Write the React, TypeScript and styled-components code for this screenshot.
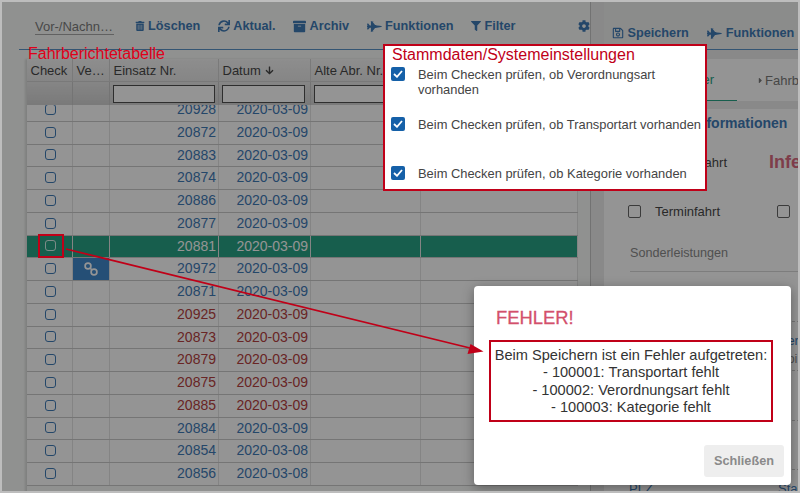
import React from 'react'
import styled, { createGlobalStyle } from 'styled-components'
import { FaTrashAlt, FaSync, FaArchive, FaFighterJet, FaFilter, FaCog, FaRegSave, FaCaretRight, FaArrowDown } from 'react-icons/fa'

type Row = { nr: string; date: string; tone: 'blue' | 'red'; selected?: boolean; linked?: boolean }

const rows: Row[] = [
  { nr: '20928', date: '2020-03-09', tone: 'blue' },
  { nr: '20872', date: '2020-03-09', tone: 'blue' },
  { nr: '20883', date: '2020-03-09', tone: 'blue' },
  { nr: '20874', date: '2020-03-09', tone: 'blue' },
  { nr: '20886', date: '2020-03-09', tone: 'blue' },
  { nr: '20877', date: '2020-03-09', tone: 'blue' },
  { nr: '20881', date: '2020-03-09', tone: 'blue', selected: true },
  { nr: '20972', date: '2020-03-09', tone: 'blue', linked: true },
  { nr: '20871', date: '2020-03-09', tone: 'blue' },
  { nr: '20925', date: '2020-03-09', tone: 'red' },
  { nr: '20873', date: '2020-03-09', tone: 'red' },
  { nr: '20879', date: '2020-03-09', tone: 'red' },
  { nr: '20875', date: '2020-03-09', tone: 'red' },
  { nr: '20885', date: '2020-03-09', tone: 'red' },
  { nr: '20884', date: '2020-03-09', tone: 'blue' },
  { nr: '20854', date: '2020-03-08', tone: 'blue' },
  { nr: '20856', date: '2020-03-08', tone: 'blue' },
]

const checks = [
  'Beim Checken prüfen, ob Verordnungsart vorhanden',
  'Beim Checken prüfen, ob Transportart vorhanden',
  'Beim Checken prüfen, ob Kategorie vorhanden',
]

const errors = [
  'Beim Speichern ist ein Fehler aufgetreten:',
  '- 100001: Transportart fehlt',
  '- 100002: Verordnungsart fehlt',
  '- 100003: Kategorie fehlt',
]

export default function App() {
  return (
    <Frame>
      <GlobalStyle />
      <LeftPane>
        <Toolbar>
          <SearchField>Vor-/Nachn…</SearchField>
          <ToolButton><FaTrashAlt size={10} />Löschen</ToolButton>
          <ToolButton><FaSync size={12} />Aktual.</ToolButton>
          <ToolButton><FaArchive size={13} />Archiv</ToolButton>
          <ToolButton><FaFighterJet size={15} />Funktionen</ToolButton>
          <ToolButton><FaFilter size={10} />Filter</ToolButton>
          <GearButton><FaCog size={12} /></GearButton>
        </Toolbar>
        <Table>
          <HeaderRow>
            <HeaderCell>Check</HeaderCell>
            <HeaderCell>Ve…</HeaderCell>
            <HeaderCell>Einsatz Nr.</HeaderCell>
            <HeaderCell>Datum <FaArrowDown size={9} /></HeaderCell>
            <HeaderCell>Alte Abr. Nr.</HeaderCell>
            <HeaderCell />
          </HeaderRow>
          <FilterRow>
            <FilterCell />
            <FilterCell />
            <FilterCell><FilterInput $width={102} /></FilterCell>
            <FilterCell><FilterInput $width={83} /></FilterCell>
            <FilterCell><FilterInput $width={100} /></FilterCell>
            <FilterCell />
          </FilterRow>
          <TableBody>
            <BodyScroll>
              {rows.map((row) => (
                <DataRow key={row.nr} $selected={row.selected}>
                  <CheckCell><RowCheck $selected={row.selected} /></CheckCell>
                  <LinkCell $linked={row.linked}>
                    {row.linked && (
                      <svg width="16" height="16" viewBox="0 0 16 16" fill="none" stroke="#fff" strokeWidth="1.7">
                        <circle cx="5" cy="5" r="2.9" />
                        <circle cx="11" cy="11" r="2.9" />
                        <path d="M7 7l2 2" />
                      </svg>
                    )}
                  </LinkCell>
                  <NumberCell $tone={row.tone} $selected={row.selected}>{row.nr}</NumberCell>
                  <NumberCell $tone={row.tone} $selected={row.selected}>{row.date}</NumberCell>
                  <EmptyCell />
                  <EmptyCell />
                </DataRow>
              ))}
            </BodyScroll>
          </TableBody>
        </Table>
      </LeftPane>
      <Splitter />
      <RightPane>
        <RightToolbar>
          <ToolButton><FaRegSave size={12} />Speichern</ToolButton>
          <ToolButton><FaFighterJet size={15} />Funktionen</ToolButton>
        </RightToolbar>
        <TabBar>
          <ActiveTab><FaCaretRight size={9} />Fahrer</ActiveTab>
          <Tab><FaCaretRight size={9} />Fahrbericht</Tab>
        </TabBar>
        <Card>
          <CardTitle>Fahrtinformationen</CardTitle>
          <InfoRow>
            <InfoLabel>Fahrt</InfoLabel>
            <InfoWarning>Infektion</InfoWarning>
          </InfoRow>
          <OptionRow>
            <OptionBox />
            <OptionLabel>Terminfahrt</OptionLabel>
            <OptionBox />
          </OptionRow>
          <ExtrasField>Sonderleistungen</ExtrasField>
          <DetailRow $top={15}><DetailLeft>Kunde</DetailLeft></DetailRow>
          <DetailRow $top={11}>
            <DetailStack>
              <DetailRight>Herr</DetailRight>
              <DetailMuted>Doi</DetailMuted>
            </DetailStack>
          </DetailRow>
          <DetailRow $top={11} />
          <DetailRow $top={11} />
          <DetailRow $top={11}><DetailLeft>PLZ</DetailLeft><DetailRight>Stadt</DetailRight></DetailRow>
        </Card>
      </RightPane>

      <Backdrop />

      <Modal>
        <ModalTitle>FEHLER!</ModalTitle>
        <ErrorBox>
          {errors.map((line) => <div key={line}>{line}</div>)}
        </ErrorBox>
        <ModalFooter>
          <CloseButton>Schließen</CloseButton>
        </ModalFooter>
      </Modal>

      <TableNote>Fahrberichtetabelle</TableNote>
      <MarkedCheck />
      <ArrowLayer width="800" height="493" viewBox="0 0 800 493">
        <path d="M66 249L472 348.5" stroke="#c00018" strokeWidth="1.8" fill="none" />
        <path d="M483.5 351.5L467.5 354L470.5 344Z" fill="#c00018" />
      </ArrowLayer>
      <SettingsNote>
        <SettingsTitle>Stammdaten/Systemeinstellungen</SettingsTitle>
        {checks.map((text) => (
          <SettingRow key={text}>
            <SettingBox>
              <svg width="10" height="8" viewBox="0 0 10 8" fill="none" stroke="#fff" strokeWidth="1.8">
                <path d="M1 4l3 2.8L9 1" />
              </svg>
            </SettingBox>
            <SettingText>{text}</SettingText>
          </SettingRow>
        ))}
      </SettingsNote>
    </Frame>
  )
}

const GlobalStyle = createGlobalStyle`
  html, body { margin: 0; padding: 0; background: #bbb; }
  * { box-sizing: border-box; }
`

const columns = '46px 37px 109px 92px 110px 157px'
const red = '#c00018'
const blue = '#3f7ab6'

const Frame = styled.div`
  position: relative;
  width: 800px;
  height: 493px;
  overflow: hidden;
  display: flex;
  background: #fff;
  font-family: "Liberation Sans", Arial, sans-serif;
  &::after {
    content: "";
    position: absolute;
    inset: 0;
    border: 2px solid #bdbdbd;
    z-index: 10;
    pointer-events: none;
  }
`

const LeftPane = styled.div`
  width: 590px;
  flex: none;
  display: flex;
  flex-direction: column;
  background: #f8faf8;
`

const Toolbar = styled.div`
  height: 50px;
  flex: none;
  margin-left: 19px;
  padding: 17px 0 0 16px;
  display: flex;
  align-items: flex-start;
  gap: 17.5px;
  border-bottom: 1px solid #5b93c7;
`

const SearchField = styled.div`
  width: 81px;
  height: 19px;
  margin-right: 3px;
  margin-top: -1px;
  font-size: 13px;
  line-height: 21px;
  color: #7d7d7d;
  border-bottom: 1px solid #a8a8a8;
`

const ToolButton = styled.div`
  display: flex;
  align-items: center;
  gap: 3.5px;
  height: 20px;
  margin-top: -1px;
  font-size: 12.7px;
  font-weight: 700;
  color: ${blue};
  white-space: nowrap;
`

const GearButton = styled(ToolButton)`
  margin-left: 45px;
`

const Table = styled.div`
  margin: 9px 12px 0 27px;
  flex: 1;
  min-height: 0;
  display: flex;
  flex-direction: column;
  box-shadow: -2px 0 2px rgba(0, 0, 0, 0.12);
`

const HeaderRow = styled.div`
  display: grid;
  flex: none;
  grid-template-columns: ${columns};
  height: 23px;
  background: linear-gradient(#f4f4f4, #e6e6e6);
  border-bottom: 1px solid #d0d0d0;
`

const HeaderCell = styled.div`
  padding: 0 3.5px;
  font-size: 13px;
  line-height: 23px;
  color: #484848;
  white-space: nowrap;
  overflow: hidden;
  border-right: 1px solid #d2d2d2;
  svg { margin-left: 1px; }
`

const FilterRow = styled.div`
  display: grid;
  flex: none;
  grid-template-columns: ${columns};
  height: 23px;
  background: linear-gradient(#e6e6e6, #d2d2d2);
`

const FilterCell = styled.div`
  padding: 3px;
  overflow: hidden;
  border-right: 1px solid #c8c8c8;
`

const FilterInput = styled.div<{ $width: number }>`
  width: ${(props) => props.$width}px;
  height: 18px;
  background: #fff;
  border: 1px solid #505050;
  border-top-width: 1.5px;
`

const TableBody = styled.div`
  flex: 1;
  min-height: 0;
  overflow: hidden;
`

const BodyScroll = styled.div`
  margin-top: -6px;
`

const DataRow = styled.div<{ $selected?: boolean }>`
  display: grid;
  grid-template-columns: ${columns};
  height: 22.75px;
  background: ${(props) => (props.$selected ? '#28a385' : '#fff')};
  border-bottom: 1.5px solid #cacaca;
`

const EmptyCell = styled.div`
  border-right: 1px solid #e4e4e4;
`

const CheckCell = styled(EmptyCell)`
  display: flex;
  align-items: center;
  justify-content: center;
  padding: 0 0 1px 1px;
`

const RowCheck = styled.span<{ $selected?: boolean }>`
  width: 11px;
  height: 11px;
  border-radius: 3px;
  border: 1.2px solid ${(props) => (props.$selected ? '#d8f0ea' : blue)};
`

const LinkCell = styled(EmptyCell)<{ $linked?: boolean }>`
  display: flex;
  align-items: center;
  justify-content: center;
  background: ${(props) => (props.$linked ? '#4088cc' : 'transparent')};
`

const NumberCell = styled(EmptyCell)<{ $tone: 'blue' | 'red'; $selected?: boolean }>`
  padding-right: 2px;
  text-align: right;
  font-size: 14px;
  line-height: 21px;
  color: ${(props) => (props.$selected ? '#fff' : props.$tone === 'red' ? '#b54040' : blue)};
`

const Splitter = styled.div`
  width: 14px;
  flex: none;
  background: #ececec;
  border-left: 1px solid #c4c4c4;
`

const RightPane = styled.div`
  flex: 1;
  min-width: 0;
  display: flex;
  flex-direction: column;
  background: #ececec;
  overflow: hidden;
`

const RightToolbar = styled.div`
  height: 50px;
  flex: none;
  padding: 24px 0 0 8px;
  display: flex;
  align-items: flex-start;
  gap: 18.5px;
  border-bottom: 1px solid #5b93c7;
  background: #f0f2f0;
`

const TabBar = styled.div`
  height: 42px;
  flex: none;
  margin-top: 9px;
  display: flex;
  background: #fff;
  white-space: nowrap;
`

const Tab = styled.div`
  display: flex;
  align-items: center;
  padding-left: 19px;
  font-size: 13px;
  color: #7a7a7a;
`

const ActiveTab = styled(Tab)`
  width: 133px;
  flex: none;
  padding: 0 23px 0 0;
  justify-content: flex-end;
  color: #28a385;
  border-bottom: 1px solid #28a385;
`

const Card = styled.div`
  margin-top: 8px;
  flex: 1;
  min-height: 0;
  overflow: hidden;
  padding: 0 0 0 24px;
  background: #fff;
`

const CardTitle = styled.div`
  height: 30px;
  padding: 5px 0 0 31px;
  font-size: 14px;
  font-weight: 700;
  line-height: 18px;
  color: ${blue};
  white-space: nowrap;
`

const InfoRow = styled.div`
  height: 47px;
  display: grid;
  grid-template-columns: 141px 1fr;
  align-items: center;
  white-space: nowrap;
`

const InfoLabel = styled.div`
  font-size: 13px;
  color: #484848;
  text-align: right;
  padding-right: 42px;
`

const InfoWarning = styled.div`
  font-size: 18px;
  font-weight: 700;
  color: #d96a80;
`

const OptionRow = styled.div`
  height: 50px;
  display: flex;
  align-items: center;
  white-space: nowrap;
`

const OptionBox = styled.span`
  width: 13px;
  height: 13px;
  flex: none;
  border: 1.3px solid #666;
  border-radius: 2px;
`

const OptionLabel = styled.span`
  margin: 0 58px 0 14px;
  width: 64px;
  font-size: 13px;
  color: #484848;
`

const ExtrasField = styled.div`
  height: 36px;
  margin-left: 2px;
  padding-top: 7px;
  font-size: 12.6px;
  line-height: 20px;
  color: #8a8a8a;
  border-bottom: 1px solid #d8d8d8;
`

const DetailRow = styled.div<{ $top: number }>`
  height: 49.5px;
  display: flex;
  justify-content: space-between;
  padding: ${(props) => props.$top}px 0 0 1px;
  font-size: 13px;
  border-bottom: 1px dashed #c8c8c8;
  &:last-child { border-bottom: none; }
`

const DetailLeft = styled.span`
  color: ${blue};
`

const DetailStack = styled.div`
  margin-left: auto;
  display: flex;
  flex-direction: column;
  gap: 3px;
`

const DetailRight = styled(DetailLeft)`
  width: 22px;
  overflow: hidden;
  white-space: nowrap;
`

const DetailMuted = styled(DetailRight)`
  color: #8a8a8a;
`

const Backdrop = styled.div`
  position: absolute;
  inset: 0;
  background: rgba(0, 0, 0, 0.42);
`

const Modal = styled.div`
  position: absolute;
  left: 474px;
  top: 286px;
  width: 317px;
  height: 199px;
  padding: 0 7px 8px 15px;
  display: flex;
  flex-direction: column;
  background: #fff;
  border-radius: 4px;
  box-shadow: 0 3px 12px rgba(0, 0, 0, 0.35);
`

const ModalTitle = styled.div`
  padding: 21px 0 0 7px;
  height: 53.5px;
  font-size: 18.4px;
  line-height: 22px;
  -webkit-text-stroke: 0.3px #d3506c;
  color: #d3506c;
`

const ErrorBox = styled.div`
  width: 284px;
  height: 82px;
  padding-top: 5px;
  border: 2px solid ${red};
  font-size: 14.6px;
  line-height: 17.5px;
  text-align: center;
  color: #333;
  white-space: nowrap;
`

const ModalFooter = styled.div`
  margin-top: auto;
  display: flex;
  justify-content: flex-end;
`

const CloseButton = styled.div`
  width: 80px;
  height: 32px;
  background: #eeeeee;
  border-radius: 3px;
  font-size: 12.7px;
  font-weight: 700;
  line-height: 32px;
  text-align: center;
  color: #8a8a8a;
`

const TableNote = styled.div`
  position: absolute;
  left: 28px;
  top: 45px;
  font-size: 16px;
  line-height: 18px;
  color: #e0001a;
`

const MarkedCheck = styled.div`
  position: absolute;
  left: 38px;
  top: 234px;
  width: 26px;
  height: 24px;
  border: 2px solid ${red};
`

const ArrowLayer = styled.svg`
  position: absolute;
  inset: 0;
`

const SettingsNote = styled.div`
  position: absolute;
  left: 383px;
  top: 44px;
  width: 324px;
  height: 147px;
  padding: 0 0 0 6px;
  background: #fff;
  border: 2px solid ${red};
`

const SettingsTitle = styled.div`
  height: 21px;
  margin-left: 1px;
  font-size: 16px;
  line-height: 18px;
  color: ${red};
  white-space: nowrap;
`

const SettingRow = styled.div`
  height: 49.7px;
  display: grid;
  grid-template-columns: 14px 1fr;
  column-gap: 13px;
  align-items: start;
`

const SettingBox = styled.span`
  width: 14px;
  height: 14px;
  display: flex;
  align-items: center;
  justify-content: center;
  background: #1560a8;
  border-radius: 2px;
`

const SettingText = styled.div`
  font-size: 12.9px;
  line-height: 15px;
  color: #444;
`
